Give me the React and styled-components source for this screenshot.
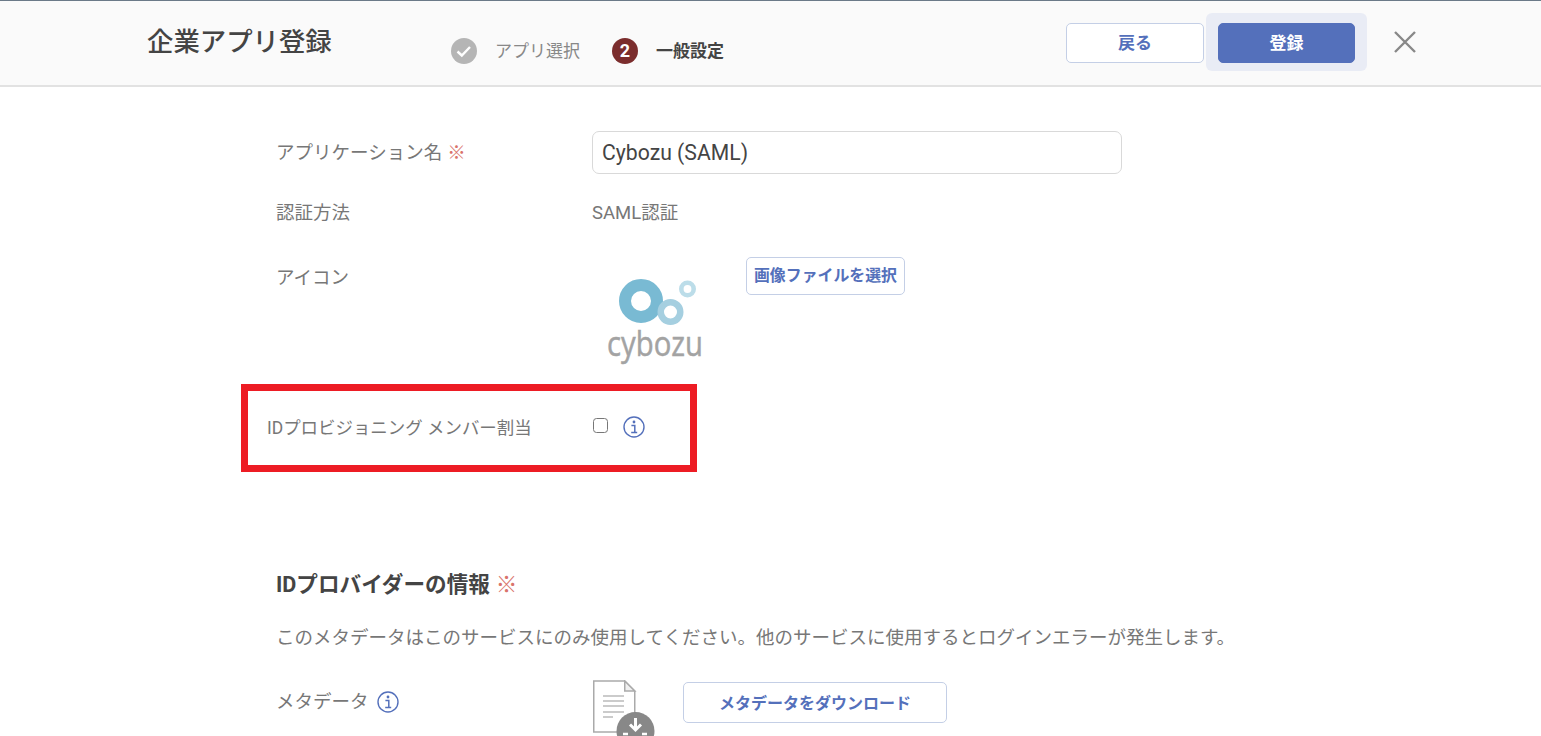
import React from "react";
import styled, { createGlobalStyle } from "styled-components";

const Global = createGlobalStyle`
  html, body { margin: 0; padding: 0; background: #fff; height: 736px; overflow: hidden; }
  body { font-family: Roboto, "Noto Sans CJK JP", sans-serif; color: #777; }
  * { box-sizing: border-box; }
`;

const Page = styled.div`
  width: 1541px;
  height: 736px;
  overflow: hidden;
`;

const Header = styled.header`
  height: 87px;
  background: #fafafa;
  border-top: 1px solid #6b7a88;
  border-bottom: 2px solid #e2e2e2;
  display: flex;
  align-items: flex-start;
  padding-left: 147px;
`;

const Title = styled.h1`
  margin: 23px 0 0;
  width: 304px;
  font-size: 26.4px;
  line-height: 36px;
  font-weight: 500;
  color: #444;
  white-space: nowrap;
`;

const Step = styled.div`
  display: flex;
  align-items: center;
  margin-top: 37px;
  margin-right: ${p => p.$gap || 0}px;
  font-size: 17px;
  line-height: 26px;
  font-weight: ${p => (p.$active ? 700 : 400)};
  color: ${p => (p.$active ? "#444" : "#888")};
  gap: 18px;
  white-space: nowrap;
`;

const StepDot = styled.span`
  width: 26px;
  height: 26px;
  border-radius: 50%;
  background: ${p => p.$color};
  color: #fff;
  display: flex;
  align-items: center;
  justify-content: center;
  font-size: 18px;
  font-weight: 700;
`;

const Actions = styled.div`
  margin-left: auto;
  display: flex;
  align-items: center;
  margin-top: 12px;
  padding-right: 125px;
`;

const Button = styled.button`
  font-family: inherit;
  font-weight: 700;
  font-size: ${p => p.$size || 16}px;
  color: #5470bb;
  background: #fff;
  border: 1.5px solid #c4cfe6;
  border-radius: 5px;
  padding: 0 0 4px;
  white-space: nowrap;
  width: ${p => p.$w}px;
  height: ${p => p.$h}px;
`;

const BackButton = styled(Button)`
  margin-top: 2px;
`;

const FocusRing = styled.div`
  margin-left: 2px;
  padding: 10px 12px 8px;
  background: #e9ecf5;
  border-radius: 6px;
`;

const PrimaryButton = styled(Button)`
  display: block;
  background: #5470bb;
  border-color: #5470bb;
  color: #fff;
`;

const CloseButton = styled.button`
  margin-left: 27px;
  padding: 0;
  width: 22px;
  height: 22px;
  border: 0;
  background: none;
  color: #888;
  display: flex;
`;

const Body = styled.main`
  padding: 44px 0 0 276px;
`;

const Row = styled.div`
  display: grid;
  grid-template-columns: 316px 1fr;
  align-items: ${p => p.$align || "center"};
  font-size: 18.5px;
  line-height: 26px;
  margin-bottom: ${p => p.$mb || 0}px;
`;

const LabelText = styled.div`
  color: #777;
  display: flex;
  align-items: center;
  white-space: nowrap;
  gap: ${p => p.$gap || 0}px;
  padding-top: ${p => p.$pt || 0}px;
`;

const Required = styled.span`
  color: #d9736b;
  margin-left: 5px;
`;

const TextInput = styled.input`
  width: 530px;
  height: 43px;
  border: 1.5px solid #d9d9d9;
  border-radius: 7px;
  padding: 0 9px;
  font-family: inherit;
  font-size: 21.2px;
  color: #444;
  background: #fff;
  outline: none;
`;

const IconArea = styled.div`
  display: flex;
  align-items: flex-start;
`;

const LogoWrap = styled.div`
  width: 154px;
  padding: 21px 0 0 13px;
  height: 108px;
`;

const Highlight = styled.div`
  width: 456px;
  height: 88px;
  margin-left: -35px;
  border: 7px solid #ed1c24;
  display: grid;
  grid-template-columns: 326px 1fr;
  align-items: center;
  padding-left: 19px;
  padding-bottom: 2px;
  font-size: 17.45px;
  color: #777;
  white-space: nowrap;
`;

const HighlightLabel = styled.span`
  padding-bottom: 2px;
`;

const Controls = styled.div`
  display: flex;
  align-items: center;
  gap: 15px;
`;

const Checkbox = styled.span`
  width: 15px;
  height: 15px;
  border: 1.7px solid #777;
  border-radius: 3.5px;
  background: #fff;
  margin-bottom: 3px;
`;

const Heading = styled.h2`
  margin: 98px 0 0;
  font-size: 21.6px;
  line-height: 30px;
  font-weight: 700;
  color: #444;
  display: flex;
  align-items: center;
`;

const HeadingMark = styled.span`
  color: #d9736b;
  font-weight: 400;
  margin-left: 6px;
`;

const Paragraph = styled.p`
  margin: 25px 0 0;
  font-size: 18.5px;
  line-height: 26px;
  color: #777;
  white-space: nowrap;
`;

const MetaArea = styled.div`
  display: flex;
  align-items: flex-start;
  gap: 28px;
  padding-left: 1px;
`;

const FileIconBox = styled.div`
  width: 62px;
  height: 56px;
`;

const DownloadButton = styled(Button)`
  margin-top: 2px;
  padding-bottom: 2px;
`;

const MetaRow = styled(Row)`
  margin-top: 29px;
  height: 60px;
  align-items: start;
`;

const InfoIcon = ({ size = 22 }) => (
  <svg width={size} height={size} viewBox="0 0 22 22" fill="none">
    <circle cx="11" cy="11" r="10" stroke="#5470bb" strokeWidth="1.4" />
    <circle cx="11" cy="6" r="1.4" fill="#5470bb" />
    <path d="M8.4 9.4h3.4v7M8.2 16.6h6" stroke="#5470bb" strokeWidth="1.5" fill="none" />
  </svg>
);

const CybozuLogo = () => (
  <svg width="116" height="92" viewBox="0 0 116 92">
    <circle cx="36" cy="23" r="16" fill="none" stroke="#79bad3" strokeWidth="12" />
    <circle cx="65.5" cy="34" r="9.75" fill="none" stroke="#a5cfe0" strokeWidth="6.5" />
    <circle cx="82.5" cy="11" r="6.2" fill="none" stroke="#bcdde9" strokeWidth="4.6" />
    <text x="2" y="78" fontFamily="'Open Sans', sans-serif" fontSize="35" fill="#a3a3a3" stroke="#a3a3a3" strokeWidth="0.5" textLength="96" lengthAdjust="spacingAndGlyphs">cybozu</text>
  </svg>
);

const FileIcon = () => (
  <svg width="62" height="56" viewBox="0 0 62 56" fill="none">
    <path d="M0.75 1h31l10 10v41H0.75z" fill="#fff" stroke="#aaa" strokeWidth="1.5" />
    <path d="M31.75 1v10h10z" stroke="#aaa" strokeWidth="1.5" fill="#f0f0f0" />
    <path d="M10 16h21M10 21h21M10 26h21M10 32h21M10 37h10" stroke="#bbb" strokeWidth="1.5" />
    <circle cx="42.5" cy="51" r="19" fill="#888" />
    <path d="M42.5 38v12M37 44.5l5.5 5.5 5.5-5.5" stroke="#fff" strokeWidth="3" fill="none" />
    <path d="M30 54h5M49 54h5" stroke="#fff" strokeWidth="2.4" />
  </svg>
);

export default function App() {
  return (
    <Page>
      <Global />
      <Header>
        <Title>企業アプリ登録</Title>
        <Step $gap={32}>
          <StepDot $color="#b5b5b5">
            <svg width="16" height="16" viewBox="0 0 16 16" fill="none">
              <path d="M1.5 8.5l4.3 4 8.2-8.5" stroke="#fff" strokeWidth="2.4" />
            </svg>
          </StepDot>
          アプリ選択
        </Step>
        <Step $active>
          <StepDot $color="#7b2d2d">2</StepDot>
          一般設定
        </Step>
        <Actions>
          <BackButton $w={138} $h={40} $size={17}>戻る</BackButton>
          <FocusRing>
            <PrimaryButton $w={137} $h={40} $size={17}>登録</PrimaryButton>
          </FocusRing>
          <CloseButton aria-label="閉じる">
            <svg width="22" height="22" viewBox="0 0 22 22" fill="none">
              <path d="M1 1l20 20M21 1L1 21" stroke="#888" strokeWidth="2.4" />
            </svg>
          </CloseButton>
        </Actions>
      </Header>
      <Body>
        <Row $mb={26}>
          <LabelText>アプリケーション名<Required>※</Required></LabelText>
          <TextInput defaultValue="Cybozu (SAML)" readOnly />
        </Row>
        <Row $mb={31}>
          <LabelText>認証方法</LabelText>
          <div>SAML認証</div>
        </Row>
        <Row $align="start" $mb={19}>
          <LabelText $pt={8}>アイコン</LabelText>
          <IconArea>
            <LogoWrap><CybozuLogo /></LogoWrap>
            <Button $w={159} $h={38} $size={15.9}>画像ファイルを選択</Button>
          </IconArea>
        </Row>
        <Highlight>
          <HighlightLabel>IDプロビジョニング メンバー割当</HighlightLabel>
          <Controls>
            <Checkbox />
            <InfoIcon />
          </Controls>
        </Highlight>
        <Heading>IDプロバイダーの情報<HeadingMark>※</HeadingMark></Heading>
        <Paragraph>このメタデータはこのサービスにのみ使用してください。他のサービスに使用するとログインエラーが発生します。</Paragraph>
        <MetaRow>
          <LabelText $gap={8} $pt={9}>メタデータ <InfoIcon /></LabelText>
          <MetaArea>
            <FileIconBox><FileIcon /></FileIconBox>
            <DownloadButton $w={264} $h={41} $size={16}>メタデータをダウンロード</DownloadButton>
          </MetaArea>
        </MetaRow>
      </Body>
    </Page>
  );
}
